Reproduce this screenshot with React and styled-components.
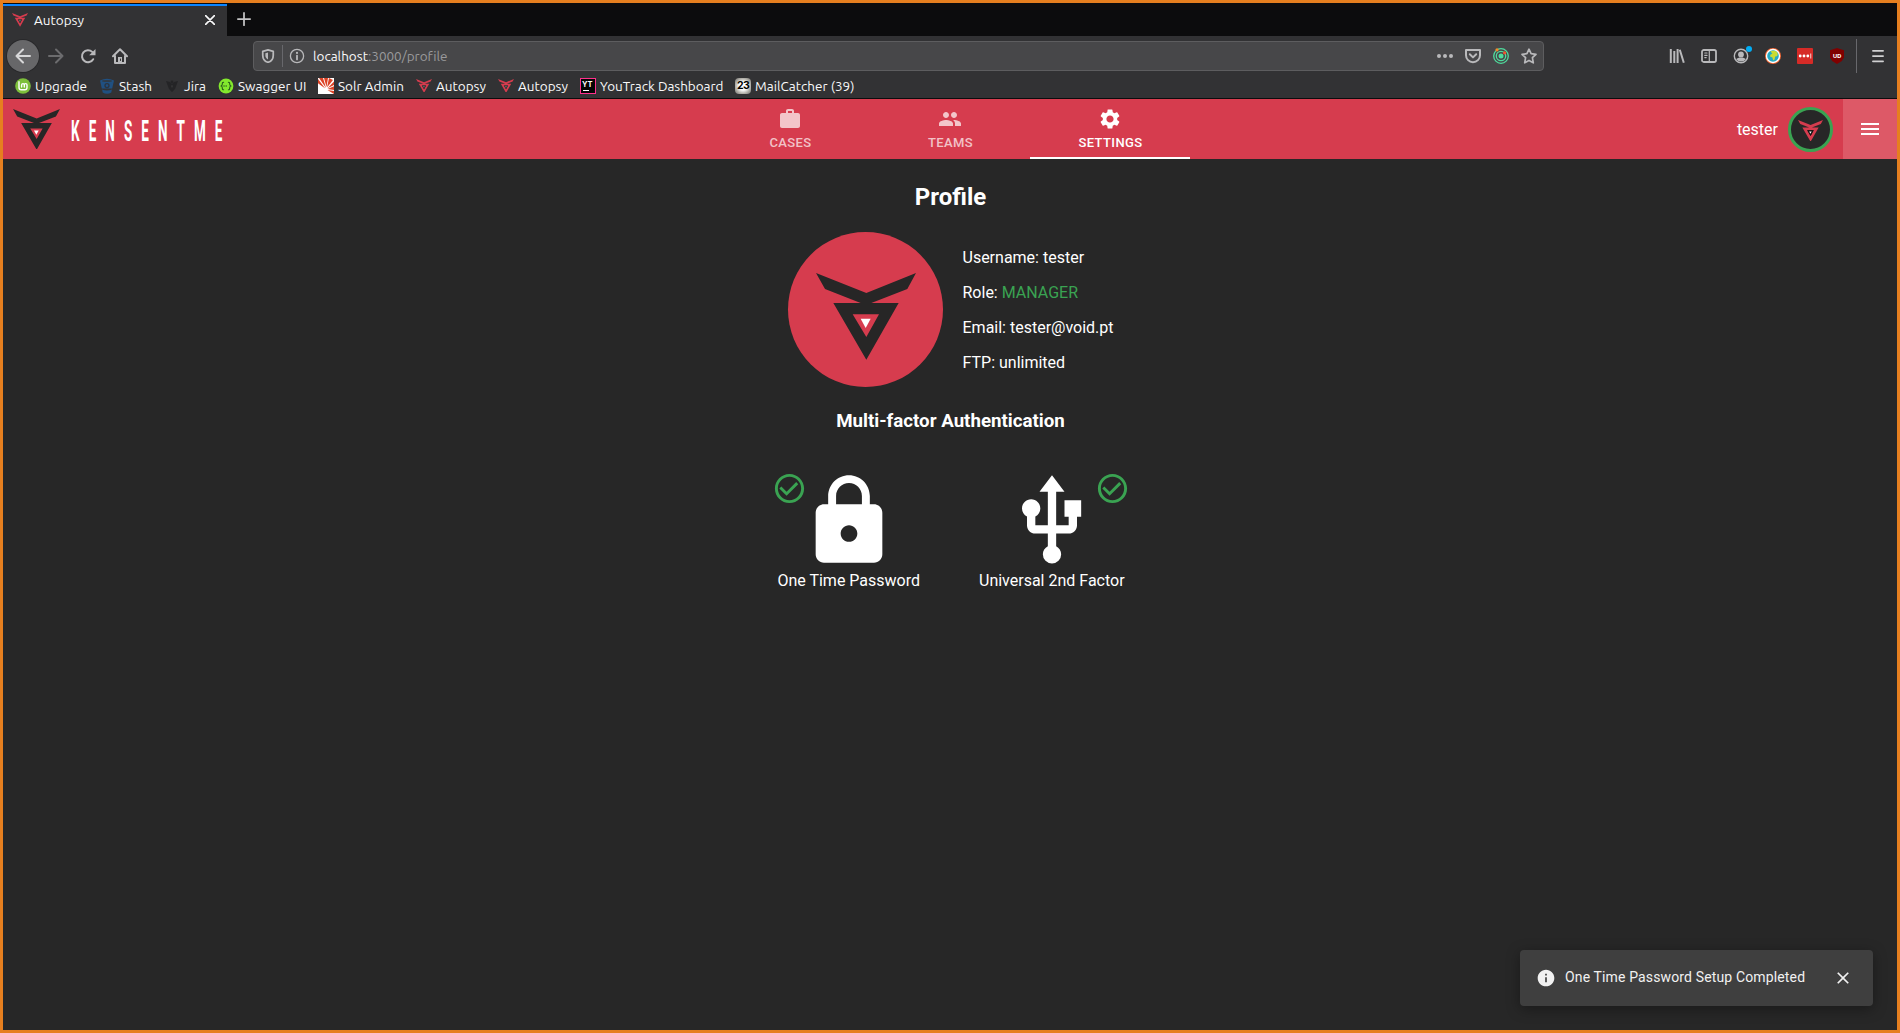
import React, { useLayoutEffect, useRef, useState } from "react";
import styled, { createGlobalStyle, css } from "styled-components";
import {
  MdWork,
  MdPeople,
  MdSettings,
  MdLock,
  MdUsb,
  MdCheckCircleOutline,
  MdInfo,
  MdMenu,
  MdClose,
} from "react-icons/md";

const Global = createGlobalStyle`
  *, *::before, *::after { box-sizing: border-box; }
  body { margin: 0; background: #272727; overflow: hidden; }
  svg { display: block; flex: none; }
`;

const red = "#d63c4e";
const dark = "#272727";
const green = "#3aa352";
const chromeFont = `Ubuntu, "Noto Sans", sans-serif`;

const Frame = styled.div`
  display: flex;
  flex-direction: column;
  width: 1900px;
  height: 1033px;
  border: 3px solid #e67f1f;
  background: ${dark};
  color: #fff;
  font-family: Roboto, sans-serif;
  position: relative;
`;

/* ---------- browser chrome ---------- */

const TabStrip = styled.div`
  display: flex;
  height: 33px;
  background: #0c0c0d;
`;

const BrowserTab = styled.div`
  display: flex;
  align-items: center;
  width: 224px;
  margin-top: 1px;
  padding: 0 12px 2px 9px;
  background: #323234;
  border-top: 2px solid #0a84ff;
  font: 13.5px ${chromeFont};
  color: #f9f9fa;
`;

const TabTitle = styled.div`
  flex: 1;
  padding-left: 6px;
`;

const NewTab = styled.div`
  display: flex;
  align-items: center;
  padding: 0 0 1px 10px;
`;

const NavBar = styled.div`
  display: flex;
  align-items: center;
  height: 40px;
  padding: 0 3px 0 4px;
  background: #323234;
`;

const IconCell = styled.div`
  display: flex;
  align-items: center;
  justify-content: center;
  width: ${(p) => p.$w || 32}px;
  height: 32px;
  flex: none;
  color: ${(p) => p.$color || "#b9b9bb"};
  ${(p) =>
    p.$round &&
    css`
      background: #676769;
      border-radius: 50%;
      box-shadow: 0 0 0 1px #29292b;
      margin-right: 1px;
    `}
`;

const UrlBar = styled.div`
  display: flex;
  align-items: center;
  width: 1291px;
  height: 30px;
  margin: 0 117px;
  background: #474749;
  border: 1px solid #5d5d5f;
  border-radius: 4px;
`;

const UrlText = styled.div`
  flex: 1;
  padding-left: 2px;
  font: 13.5px ${chromeFont};
  color: #9a9a9c;
  b {
    font-weight: 400;
    color: #f9f9fa;
  }
`;

const Rule = styled.div`
  width: 1px;
  height: ${(p) => p.$h}px;
  background: #68686c;
  margin: ${(p) => p.$m || 0};
`;

const Bookmarks = styled.div`
  display: flex;
  align-items: center;
  height: 23px;
  padding: 0 0 3px 12px;
  background: #323234;
  border-bottom: 1px solid #0c0c0d;
  font: 13.5px ${chromeFont};
  color: #f9f9fa;
`;

const Bookmark = styled.div`
  display: flex;
  align-items: center;
  width: ${(p) => p.$w}px;
  gap: 4px;
`;

const Tracked = styled.span`
  display: inline-block;
  white-space: nowrap;
`;

/* Spreads its letters so that the text takes exactly `width` pixels. */
function Fit({ width, count, children }) {
  const ref = useRef(null);
  const [spacing, setSpacing] = useState(0);
  useLayoutEffect(() => {
    const natural = ref.current.getBoundingClientRect().width;
    setSpacing((width - natural) / count);
  }, [width, count]);
  return (
    <Tracked ref={ref} style={{ letterSpacing: `${spacing}px` }}>
      {children}
    </Tracked>
  );
}

/* ---------- drawings ---------- */

function Mark({ width, color, inner = "none", core = "#fff" }) {
  return (
    <svg width={width} height={(width * 260) / 300} viewBox="139 160 300 260">
      <path
        fill={color}
        fillRule="evenodd"
        d="M139 160L290 220L439 160L413 208L305 250H387L290 420L191 250H273L166 208ZM249 284L290 352L328 284Z"
      />
      <path fill={inner} d="M249 284H328L290 352Z" />
      <path fill={core} d="M273 297H303L288 325Z" />
    </svg>
  );
}

const Favicon = () => <Mark width={16} color={red} inner="#323234" core="#8b8b8d" />;

function Glyph({ size = 16, children, ...rest }) {
  return (
    <svg
      width={size}
      height={size}
      viewBox="0 0 16 16"
      fill="none"
      stroke="currentColor"
      strokeWidth="2"
      strokeLinecap="round"
      strokeLinejoin="round"
      {...rest}
    >
      {children}
    </svg>
  );
}

const Back = () => <Glyph><path d="M15 8H1.5M8 1.5L1.5 8L8 14.5" /></Glyph>;
const Forward = () => <Glyph><path d="M1 8H14.5M8 1.5L14.5 8L8 14.5" /></Glyph>;
const Reload = () => (
  <Glyph>
    <path d="M13.2 11.2A6 6 0 1 1 12.2 3.9" />
    <path fill="currentColor" stroke="none" d="M15.5 1V7.3H9.2Z" />
  </Glyph>
);
const Home = () => (
  <Glyph>
    <path d="M1 8.2L8 1.3L15 8.2M3 8V15H13V8" />
    <path fill="currentColor" stroke="none" d="M6 9H10V15H6Z" />
    <path stroke="#323234" strokeWidth="1" d="M8.5 11V12.5" />
  </Glyph>
);
const Shield = () => (
  <Glyph size={14}>
    <path d="M8 1L14 2.7V7C14 11 12 14 8 15.2C4 14 2 11 2 7V2.7Z" />
    <path fill="currentColor" stroke="none" d="M8 4L5 4.8V7C5 9.3 6 11 8 12Z" />
  </Glyph>
);
const UrlInfo = () => (
  <Glyph strokeWidth="1.3">
    <circle cx="8" cy="8" r="6.6" />
    <path strokeWidth="1.8" d="M8 7.6V11.4" />
    <circle cx="8" cy="4.9" r="1.1" fill="currentColor" stroke="none" />
  </Glyph>
);
const Dots = () => (
  <Glyph fill="currentColor" stroke="none">
    <circle cx="2" cy="8" r="2" /><circle cx="8" cy="8" r="2" /><circle cx="14" cy="8" r="2" />
  </Glyph>
);
const Pocket = () => (
  <Glyph>
    <path d="M1 2H15V7.2A7 7 0 0 1 1 7.2Z" />
    <path d="M4.8 6.3L8 9.4L11.2 6.3" />
  </Glyph>
);
const Radar = () => (
  <Glyph strokeWidth="1.3" stroke="#4fdc9d">
    <circle cx="8" cy="8" r="7.3" /><circle cx="8" cy="8" r="4.7" />
    <circle cx="8" cy="8" r="2.5" fill="#4fdc9d" stroke="none" />
    <circle cx="4" cy="1.8" r="1.6" fill="#f38b2a" stroke="none" />
    <circle cx="11.6" cy="4.8" r="1.6" fill="#f0552f" stroke="none" />
  </Glyph>
);
const Star = () => (
  <Glyph strokeWidth="1.7">
    <path d="M8 1.2L10.1 5.7L15 6.3L11.4 9.7L12.3 14.8L8 12.4L3.7 14.8L4.6 9.7L1 6.3L5.9 5.7Z" />
  </Glyph>
);
const Library = () => (
  <Glyph strokeLinecap="butt">
    <path d="M1.8 1V15M5.3 3V15M8.6 1V15M10.8 1.7L14.8 14.7" />
  </Glyph>
);
const Sidebar = () => (
  <Glyph strokeWidth="1.8">
    <rect x="1" y="2" width="14" height="12" rx="1.8" />
    <path strokeWidth="1.2" d="M8.3 2V14M3.8 5H6M3.8 7.4H6M3.8 9.6H5.2" />
  </Glyph>
);
const Account = () => (
  <Glyph strokeWidth="1.4" viewBox="0 0 16 16" style={{ overflow: "visible" }}>
    <circle cx="8" cy="8" r="6.7" />
    <circle cx="8" cy="6.4" r="2.9" fill="currentColor" stroke="none" />
    <path fill="currentColor" stroke="none" d="M3.2 11.2C4.7 9 11.3 9 12.8 11.2A6 6 0 0 1 3.2 11.2Z" />
    <circle cx="16" cy="1" r="3" fill="#00adf5" stroke="none" />
  </Glyph>
);
const Globe = () => (
  <Glyph stroke="none">
    <circle cx="8" cy="8" r="8" fill="#f0622f" />
    <circle cx="8" cy="8" r="7.2" fill="#fff" />
    <circle cx="8" cy="8" r="5.8" fill="#24a9c4" />
    <path fill="#c9dc32" d="M5.4 3.6C7 2.4 10 2.2 11.9 4.1C13 5.6 13 7.4 12 8.2L10.2 8.6L9.6 11.6L8.2 12.4L7.4 9.4L5 8.6L5.4 6.8L7.4 5.6Z" />
  </Glyph>
);
const PassDots = () => (
  <Glyph stroke="none">
    <rect width="16" height="16" rx="1" fill="#d62b27" />
    <g fill="#fff">
      <circle cx="3.2" cy="8" r="1.4" /><circle cx="7" cy="8" r="1.4" /><circle cx="10.8" cy="8" r="1.4" />
      <rect x="13.4" y="5.5" width=".8" height="5" />
    </g>
  </Glyph>
);

const ShieldBadge = styled.div`
  display: flex;
  align-items: center;
  justify-content: center;
  width: 14px;
  height: 16px;
  padding-bottom: 1px;
  background: #800000;
  clip-path: polygon(50% 0, 100% 14%, 100% 58%, 85% 82%, 50% 100%, 15% 82%, 0 58%, 0 14%);
  color: #fff;
  font: 700 6px "Open Sans", sans-serif;
  letter-spacing: -0.2px;
`;

const Burger = () => (
  <Glyph size={14}>
    <path d="M2.2 2H13.8M2.2 8H13.8M2.2 14H13.8" />
  </Glyph>
);

const Mint = () => (
  <Glyph stroke="none">
    <circle cx="8" cy="8" r="7.8" fill="#7dbf3b" />
    <path fill="none" stroke="#fff" strokeWidth="1.4" d="M4 3.8V9.5Q4 11.8 6.2 11.8H9.8Q12 11.8 12 9.5V7Q12 5.6 10.6 5.6T9.3 7V9M9.3 7Q9.3 5.6 8 5.6T6.6 7V9" />
  </Glyph>
);
const Bucket = () => (
  <Glyph stroke="none">
    <path fill="#205081" d="M1 2.5Q8-.8 15 2.5L13.2 10.5H2.8ZM3.1 11.5Q8 13.6 12.9 11.5L12.3 14.6Q8 17 3.7 14.6Z" />
    <ellipse cx="8" cy="2.9" rx="5" ry="1" fill="#2f3b48" />
    <circle cx="8" cy="7.6" r="2" fill="none" stroke="#2b3440" strokeWidth="1.3" />
  </Glyph>
);
const Jira = () => (
  <Glyph stroke="none">
    <path fill="#242426" d="M2 3L6 4L8 6L10 4L14 3L11 11L8 14L5 11Z" />
    <circle cx="8" cy="4" r="1.4" fill="#242426" />
    <path fill="#38383a" d="M6.8 7.6H9.2L8 10Z" />
  </Glyph>
);
const Swagger = () => (
  <Glyph strokeWidth="1.1" stroke="#25551c">
    <circle cx="8" cy="8" r="7.4" fill="#83e92d" stroke="none" />
    <path d="M5.6 4.2Q4.2 4.2 4.3 5.9T3 8Q4.3 8 4.3 10T5.6 11.8M10.4 4.2Q11.8 4.2 11.7 5.9T13 8Q11.7 8 11.7 10T10.4 11.8" />
    <path strokeWidth="1.3" strokeDasharray="0.1 2" d="M6 8H10.2" />
  </Glyph>
);
const Solr = () => (
  <Glyph stroke="none">
    <rect width="16" height="16" fill="#fff" />
    <path fill="#dc4326" d="M1 0H5L8 10ZM6 0H10L8.5 9ZM11 0L15 2L9 9.5ZM16 3.5V7L9.5 10.2ZM16 8.2V12L9.5 11ZM16 13V16L9.4 12ZM0 1L7.2 10.4L0 5.2Z" />
  </Glyph>
);

const YtBadge = styled.div`
  display: flex;
  flex-direction: column;
  width: 16px;
  height: 16px;
  padding: 2px 0 0 1px;
  border: 1px solid #ff318c;
  background: #050505;
  color: #fff;
  font: 700 7.5px/7px Inter, sans-serif;
  letter-spacing: 0;
  &::after {
    content: "";
    width: 6px;
    height: 1px;
    margin: 2px 0 0 1px;
    background: #fff;
  }
`;

const MailBadge = styled.div`
  display: flex;
  align-items: center;
  justify-content: center;
  width: 16px;
  height: 16px;
  color: #000;
  font: 700 10.5px/16px Inter, sans-serif;
  letter-spacing: -0.6px;
  border-radius: 4px;
  background: radial-gradient(#fff 35%, #b5b3ac 65%, #6b6a68);
`;

/* ---------- application ---------- */

const Header = styled.header`
  display: grid;
  grid-template-columns: 1fr auto 1fr;
  height: 60px;
  flex: none;
  background: ${red};
`;

const Brand = styled.div`
  display: flex;
  align-items: center;
  padding-left: 10px;
`;

const Wordmark = styled.div`
  width: 0;
  margin-left: 11px;
  padding-top: 4px;
  font: 700 30px/36px Roboto, sans-serif;
  letter-spacing: 20.2px;
  white-space: nowrap;
  transform: scaleX(0.45);
  transform-origin: 0 50%;
`;

const Nav = styled.nav`
  display: flex;
`;

const NavTab = styled.div`
  display: flex;
  flex-direction: column;
  align-items: center;
  width: 160px;
  height: 60px;
  padding-top: 8px;
  gap: 2px;
  color: ${(p) => (p.$active ? "#fff" : "rgba(255,255,255,.7)")};
  border-bottom: 2px solid ${(p) => (p.$active ? "#fff" : "transparent")};
  font-size: 13px;
  font-weight: 500;
  line-height: 20px;
  letter-spacing: 0.03em;
  text-transform: uppercase;
`;

const NavLabel = styled.span`
  padding-left: 1px;
`;

const UserArea = styled.div`
  display: flex;
  align-items: center;
  justify-content: flex-end;
  font-size: 16px;
`;

const SmallAvatar = styled.div`
  display: flex;
  align-items: center;
  justify-content: center;
  width: 45px;
  height: 45px;
  margin: 1px 10px 0 10px;
  padding-top: 2px;
  border: 3px solid ${green};
  border-radius: 50%;
  background: ${dark};
`;

const MenuButton = styled.div`
  display: flex;
  align-items: center;
  justify-content: center;
  width: 54px;
  height: 60px;
  background: #dd5967;
`;

const Page = styled.main`
  display: flex;
  flex-direction: column;
  align-items: center;
`;

const Title = styled.h2`
  margin: 24px 0 21px;
  padding-left: 1px;
  font-size: 24px;
  line-height: 28px;
`;

const Profile = styled.section`
  display: flex;
  align-items: center;
  gap: 20px;
  width: 325px;
`;

const Avatar = styled.div`
  display: flex;
  align-items: center;
  justify-content: center;
  width: 155px;
  height: 155px;
  flex: none;
  padding: 14px 0 0 2px;
  border-radius: 50%;
  background: ${red};
`;

const Details = styled.div`
  display: flex;
  flex-direction: column;
  font-size: 16px;
  line-height: 35px;
  white-space: nowrap;
`;

const Role = styled.span`
  color: ${green};
`;

const Subtitle = styled.h3`
  margin: 22px 0 0;
  padding-left: 1px;
  font-size: 18.72px;
  line-height: 24px;
`;

const Factors = styled.section`
  display: flex;
  gap: 59px;
  margin-top: 38px;
  padding-left: 2px;
`;

const Factor = styled.div`
  position: relative;
  display: flex;
  flex-direction: column;
  align-items: center;
  font-size: 16px;
  line-height: 19px;
`;

const Status = styled.div`
  position: absolute;
  top: 0;
  left: calc(50% + ${(p) => p.$shift}px);
  color: ${green};
`;

const Snackbar = styled.div`
  position: absolute;
  right: 24px;
  bottom: 24px;
  display: flex;
  align-items: center;
  width: 353px;
  height: 56px;
  padding: 0 20px 0 16px;
  border-radius: 4px;
  background: #3f3f3f;
  box-shadow: 0 3px 14px rgba(0, 0, 0, 0.35);
  font-size: 14px;
  letter-spacing: 0.01em;
  color: #f1f1f1;
`;

const Message = styled.div`
  flex: 1;
  padding: 0 0 2px 9px;
`;

const bookmarks = [
  { label: "Upgrade", text: 52, width: 84, icon: <Mint /> },
  { label: "Stash", text: 33, width: 65, icon: <Bucket /> },
  { label: "Jira", text: 22, width: 54, icon: <Jira /> },
  { label: "Swagger UI", text: 68.5, width: 100, icon: <Swagger /> },
  { label: "Solr Admin", text: 66, width: 98, icon: <Solr /> },
  { label: "Autopsy", text: 50, width: 82, icon: <Favicon /> },
  { label: "Autopsy", text: 50, width: 82, icon: <Favicon /> },
  { label: "YouTrack Dashboard", text: 123.5, width: 155, icon: <YtBadge>YT</YtBadge> },
  { label: "MailCatcher (39)", text: 99.5, width: 130, icon: <MailBadge>23</MailBadge> },
];

const tabs = [
  { label: "Cases", Icon: MdWork },
  { label: "Teams", Icon: MdPeople },
  { label: "Settings", Icon: MdSettings, active: true },
];

export default function App() {
  return (
    <Frame>
      <Global />
      <TabStrip>
        <BrowserTab>
          <Favicon />
          <TabTitle><Fit width={50} count={7}>Autopsy</Fit></TabTitle>
          <Glyph size={10} color="#f9f9fa" strokeWidth="2.6"><path d="M1 1L15 15M15 1L1 15" /></Glyph>
        </BrowserTab>
        <NewTab>
          <Glyph size={14} color="#c4c4c5"><path d="M8 1V15M1 8H15" /></Glyph>
        </NewTab>
      </TabStrip>
      <NavBar>
        <IconCell $round $color="#d8d8d9"><Back /></IconCell>
        <IconCell $color="#6c6c6e"><Forward /></IconCell>
        <IconCell><Reload /></IconCell>
        <IconCell><Home /></IconCell>
        <UrlBar>
          <IconCell $w={28}><Shield /></IconCell>
          <Rule $h={22} />
          <IconCell $w={28}><UrlInfo /></IconCell>
          <UrlText>
            <Fit width={134} count={22}><b>localhost</b>:3000/profile</Fit>
          </UrlText>
          <IconCell $w={28}><Dots /></IconCell>
          <IconCell $w={28}><Pocket /></IconCell>
          <IconCell $w={28}><Radar /></IconCell>
          <IconCell $w={28}><Star /></IconCell>
        </UrlBar>
        <IconCell><Library /></IconCell>
        <IconCell><Sidebar /></IconCell>
        <IconCell><Account /></IconCell>
        <IconCell><Globe /></IconCell>
        <IconCell><PassDots /></IconCell>
        <IconCell><ShieldBadge>UD</ShieldBadge></IconCell>
        <Rule $h={34} $m="0 5px 0 3px" />
        <IconCell $color="#d0d0d1"><Burger /></IconCell>
      </NavBar>
      <Bookmarks>
        {bookmarks.map((b, i) => (
          <Bookmark key={i} $w={b.width}>
            {b.icon}
            <Fit width={b.text} count={b.label.length}>{b.label}</Fit>
          </Bookmark>
        ))}
      </Bookmarks>

      <Header>
        <Brand>
          <Mark width={47} color="#272626" />
          <Wordmark>KENSENTME</Wordmark>
        </Brand>
        <Nav>
          {tabs.map(({ label, Icon, active }) => (
            <NavTab key={label} $active={active}>
              <Icon size={24} />
              <NavLabel>{label}</NavLabel>
            </NavTab>
          ))}
        </Nav>
        <UserArea>
          tester
          <SmallAvatar><Mark width={25} color={red} inner="#111" /></SmallAvatar>
          <MenuButton><MdMenu size={24} /></MenuButton>
        </UserArea>
      </Header>

      <Page>
        <Title>Profile</Title>
        <Profile>
          <Avatar><Mark width={100} color="#272626" /></Avatar>
          <Details>
            <div>Username: tester</div>
            <div>Role: <Role>MANAGER</Role></div>
            <div>Email: tester@void.pt</div>
            <div>FTP: unlimited</div>
          </Details>
        </Profile>
        <Subtitle>Multi-factor Authentication</Subtitle>
        <Factors>
          <Factor>
            <MdLock size={100} />
            <Status $shift={-77}><MdCheckCircleOutline size={35} /></Status>
            One Time Password
          </Factor>
          <Factor>
            <MdUsb size={100} />
            <Status $shift={43}><MdCheckCircleOutline size={35} /></Status>
            Universal 2nd Factor
          </Factor>
        </Factors>
      </Page>

      <Snackbar>
        <MdInfo size={20} />
        <Message>One Time Password Setup Completed</Message>
        <MdClose size={20} />
      </Snackbar>
    </Frame>
  );
}
